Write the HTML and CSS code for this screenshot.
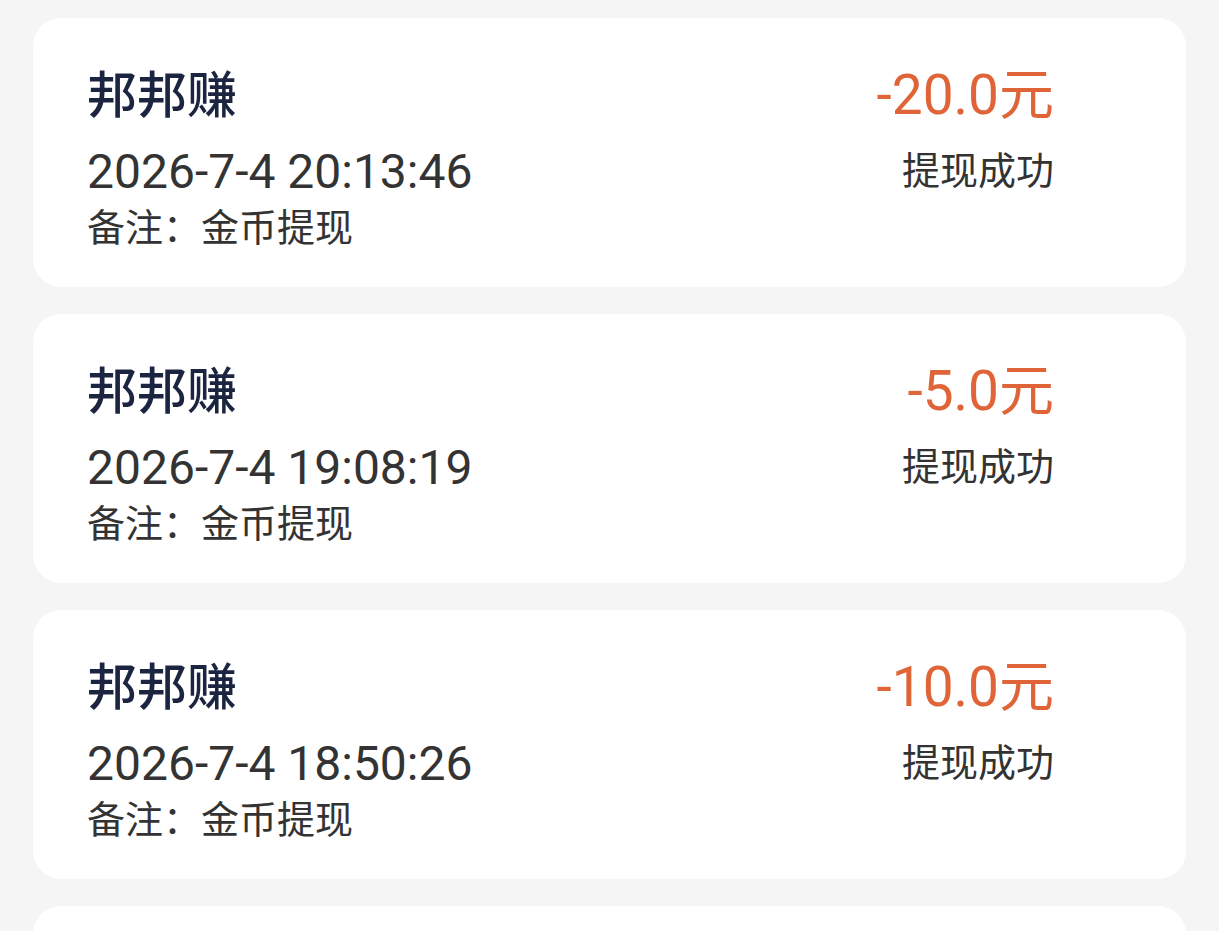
FILE: index.html
```html
<!DOCTYPE html>
<html lang="zh-CN">
  <head>
    <meta charset="UTF-8" />
    <title>提现记录</title>
    <link rel="stylesheet" href="styles.css">
  </head>
  <body>

    <!-- Records -->
    <div class="list">
      <div class="card">
        <div class="info">
          <div class="name">邦邦赚</div>
          <div class="time">2026-7-4 20:13:46</div>
          <div class="note">备注：金币提现</div>
        </div>
        <div class="side">
          <div class="amount">-20.0元</div>
          <div class="status">提现成功</div>
        </div>
      </div>

      <div class="card">
        <div class="info">
          <div class="name">邦邦赚</div>
          <div class="time">2026-7-4 19:08:19</div>
          <div class="note">备注：金币提现</div>
        </div>
        <div class="side">
          <div class="amount">-5.0元</div>
          <div class="status">提现成功</div>
        </div>
      </div>

      <div class="card">
        <div class="info">
          <div class="name">邦邦赚</div>
          <div class="time">2026-7-4 18:50:26</div>
          <div class="note">备注：金币提现</div>
        </div>
        <div class="side">
          <div class="amount">-10.0元</div>
          <div class="status">提现成功</div>
        </div>
      </div>

      <!-- next record, scrolled below the fold -->
      <div class="card"></div>
    </div>

  </body>
</html>
```

FILE: styles.css
```css
* {
  box-sizing: border-box;
}

html, body {
  height: 100%;
  overflow: hidden;
}

body {
  margin: 0;
  font-family: Roboto, "Noto Sans CJK SC", sans-serif;
  background-color: #f5f5f5;
  color: #333;
}

.list {
  display: flex;
  flex-direction: column;
  gap: 27px;
  padding: 18px 33px 0 33px;
}

.card {
  background: white;
  border-radius: 28px;
  height: 269px;
  flex-shrink: 0;
  padding: 42px 132px 0 54px;
  display: flex;
  justify-content: space-between;
}

.name {
  font-family: "Noto Sans CJK SC", sans-serif;
  font-size: 50px;
  font-weight: 500;
  line-height: 62px;
  color: #1b2441;
}

.time {
  margin-top: 22px;
  font-size: 48px;
  line-height: 56px;
  color: #333;
}

.note {
  margin-top: 1px;
  font-family: "Noto Sans CJK SC", sans-serif;
  font-size: 38px;
  line-height: 48px;
  color: #333;
}

.side {
  text-align: right;
}

.amount {
  margin-top: 4px;
  font-size: 55px;
  line-height: 62px;
  color: #df6437;
}

.status {
  margin-top: 14px;
  font-family: "Noto Sans CJK SC", sans-serif;
  font-size: 38px;
  line-height: 56px;
  color: #333;
}
```
